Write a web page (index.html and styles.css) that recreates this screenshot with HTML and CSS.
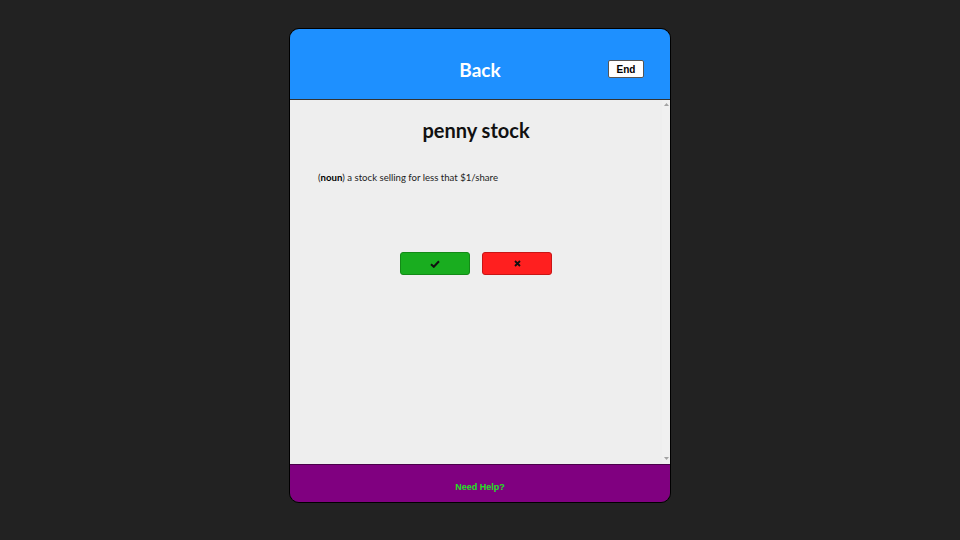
FILE: index.html
```html
<!DOCTYPE html>
<html lang="en">
<head>
<meta charset="utf-8">
<title>Flashcard</title>
<link rel="stylesheet" href="styles.css">
</head>
<body>
<div class="app">
  <header class="top">
    <h1 class="title">Back</h1>
    <button class="end">End</button>
  </header>
  <div class="body">
    <main class="content">
      <h2 class="term">penny stock</h2>
      <p class="def">(<b>noun</b>) a stock selling for less that $1/share</p>
      <div class="actions">
        <button class="btn ok"><svg width="10" height="8" viewBox="0 0 10 8"><path d="M1 4.2 L3.8 6.8 L9 1.2" fill="none" stroke="#111" stroke-width="2"/></svg></button>
        <button class="btn no"><svg width="7" height="7" viewBox="0 0 7 7"><path d="M1 1 L6 6 M6 1 L1 6" fill="none" stroke="#111" stroke-width="1.8"/></svg></button>
      </div>
    </main>
    <div class="scrollbar">
      <svg width="5" height="3" viewBox="0 0 5 3"><path d="M0 3 L2.5 0 L5 3Z" fill="#a3a3a3"/></svg>
      <svg width="5" height="3" viewBox="0 0 5 3"><path d="M0 0 L2.5 3 L5 0Z" fill="#a3a3a3"/></svg>
    </div>
  </div>
  <footer class="bottom">
    <span class="help">Need Help?</span>
  </footer>
</div>
</body>
</html>
```
FILE: styles.css
```css
html, body {
  margin: 0;
  padding: 0;
  background: #222222;
}
body {
  padding-top: 28px;
}
.app {
  width: 380px;
  height: 473px;
  margin: 0 auto;
  border: 1px solid #000;
  border-radius: 10px;
  overflow: hidden;
  display: flex;
  flex-direction: column;
  font-family: Lato, "Noto Sans", sans-serif;
}
.top {
  flex: none;
  height: 71px;
  box-sizing: border-box;
  background: #1e90ff;
  border-bottom: 1px solid #333;
  display: flex;
  align-items: center;
  justify-content: center;
  position: relative;
  padding-top: 10px;
}
.title {
  margin: 0;
  color: #fff;
  font-size: 19px;
  font-weight: 700;
}
.end {
  position: absolute;
  right: 26px;
  top: 31px;
  width: 36px;
  height: 18px;
  padding: 0;
  background: #fff;
  border: 1px solid #555;
  border-radius: 2px;
  font-family: "Liberation Sans", Arial, sans-serif;
  font-weight: 700;
  font-size: 10px;
  color: #000;
}
.body {
  flex: 1;
  display: flex;
  min-height: 0;
  background: #eeeeee;
}
.content {
  flex: 1;
  padding: 0 28px;
}
.scrollbar {
  flex: none;
  width: 8px;
  background: #f0f0f0;
  display: flex;
  flex-direction: column;
  justify-content: space-between;
  align-items: center;
  padding: 3px 0 4px;
}
.scrollbar svg {
  display: block;
}
.term {
  margin: 18px 0 0;
  text-align: center;
  font-size: 20px;
  font-weight: 700;
  color: #111;
}
.def {
  margin: 29px 0 0;
  font-size: 9.6px;
  line-height: 13px;
  color: #222;
}
.def b {
  color: #000;
}
.actions {
  display: flex;
  justify-content: center;
  gap: 12px;
  margin-top: 68px;
}
.btn {
  width: 70px;
  height: 23px;
  border-radius: 3px;
  padding: 0;
  display: flex;
  align-items: center;
  justify-content: center;
}
.ok {
  background: #19ad1f;
  border: 1px solid #138a17;
}
.no {
  background: #ff1f1f;
  border: 1px solid #c81515;
}
.bottom {
  flex: none;
  height: 30px;
  background: #800080;
  border-top: 1px solid #4a004a;
  display: flex;
  align-items: center;
  justify-content: center;
  padding-top: 7px;
}
.help {
  color: #22e322;
  font-family: "Liberation Sans", Arial, sans-serif;
  font-weight: 700;
  font-size: 9px;
}
```
